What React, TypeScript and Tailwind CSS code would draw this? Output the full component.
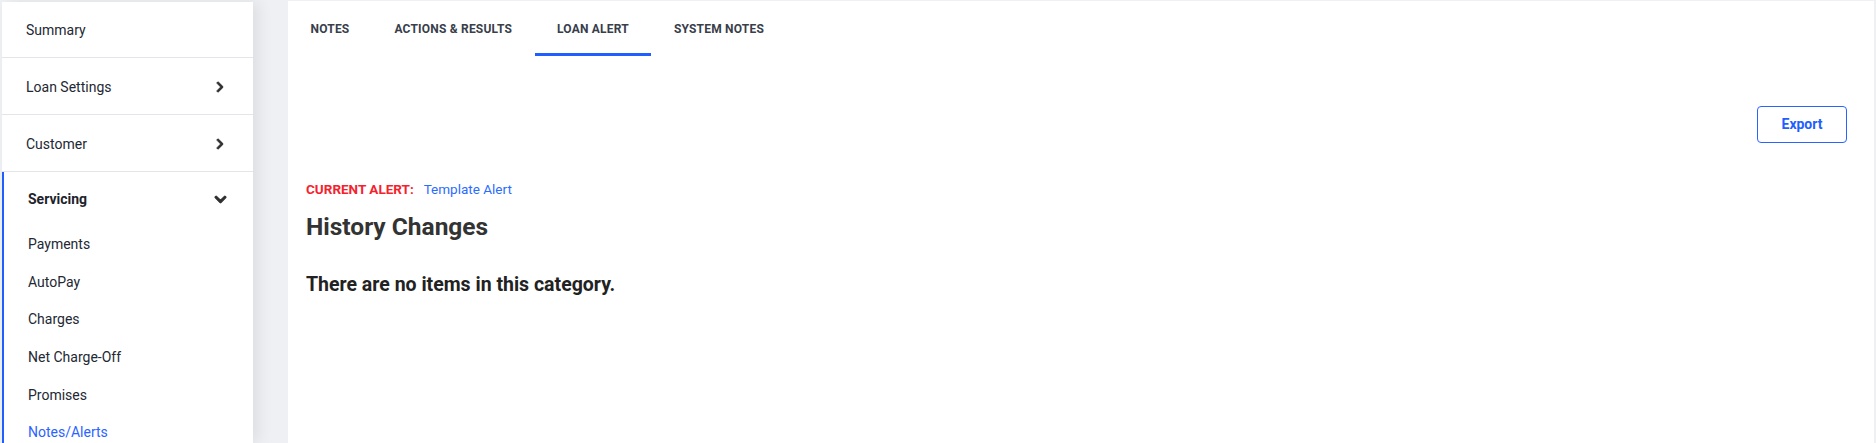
import { FaChevronRight, FaChevronDown } from 'react-icons/fa';

const tabs = ['Notes', 'Actions & Results', 'Loan Alert', 'System Notes'];
const subItems = ['Payments', 'AutoPay', 'Charges', 'Net Charge-Off', 'Promises', 'Notes/Alerts'];

export default function App() {
  return (
    <div
      className="flex h-[443px] w-[1876px] overflow-hidden bg-[#eef0f3]"
      style={{ fontFamily: 'Roboto, "Liberation Sans", sans-serif' }}
    >
      {/* sidebar */}
      <aside className="mt-[2px] ml-[2px] w-[251px] shrink-0 bg-white text-[14px] text-[#232833] shadow-[6px_0_14px_rgba(0,0,0,0.07)]">
        <div className="flex h-[56px] items-center border-b border-[#e3e5e8] px-[24px] pt-[2px]">Summary</div>
        <div className="flex h-[57px] items-center justify-between border-b border-[#e3e5e8] pl-[24px] pr-[27px] pt-[2px]">
          <span>Loan Settings</span>
          <FaChevronRight className="text-[12px] text-[#2f2f2f]" stroke="currentColor" strokeWidth={40} />
        </div>
        <div className="flex h-[57px] items-center justify-between border-b border-[#e3e5e8] pl-[24px] pr-[27px] pt-[2px]">
          <span>Customer</span>
          <FaChevronRight className="text-[12px] text-[#2f2f2f]" stroke="currentColor" strokeWidth={40} />
        </div>
        <div className="border-l-2 border-[#1f5eff]">
          <div className="flex h-[54px] items-center justify-between pl-[24px] pr-[26px]">
            <span className="font-bold text-[#1e222b]">Servicing</span>
            <FaChevronDown className="text-[13px] text-[#2f2f2f]" stroke="currentColor" strokeWidth={40} />
          </div>
          {subItems.map((s) => (
            <div
              key={s}
              className={`flex h-[37.6px] items-center pl-[24px] ${s === 'Notes/Alerts' ? 'text-[#2b63ff]' : 'text-[#232833]'}`}
            >
              {s}
            </div>
          ))}
        </div>
      </aside>

      {/* main panel */}
      <main className="mt-[1px] mr-[2px] ml-[35px] flex-1 bg-white">
        <div className="flex h-[55px]">
          {tabs.map((t) => (
            <div
              key={t}
              className={`flex items-center px-[22.5px] pt-[3px] text-[12px] font-bold uppercase tracking-[0.2px] text-[#383e4a] ${t === 'Loan Alert' ? 'border-b-[3px] border-[#1f5eff]' : 'border-b-[3px] border-transparent'}`}
            >
              {t}
            </div>
          ))}
        </div>

        <div className="flex justify-end pt-[50px] pr-[27px]">
          <button className="h-[37px] w-[90px] rounded-[4px] border border-[#2a63ff] text-[14px] font-bold text-[#1f5eff]">
            Export
          </button>
        </div>

        <div className="pl-[18px]">
          <div className="mt-[37px] flex items-center text-[13.5px] leading-[18px]">
            <span className="font-bold uppercase text-[#f5222d]">Current Alert:</span>
            <span className="ml-[10px] text-[#2b6cff]">Template Alert</span>
          </div>
          <h2 className="mt-[14px] text-[24.5px] font-bold leading-[30px] text-[#333]">History Changes</h2>
          <p className="mt-[31px] text-[19.5px] font-bold leading-[24px] text-[#222]">There are no items in this category.</p>
        </div>
      </main>
    </div>
  );
}
